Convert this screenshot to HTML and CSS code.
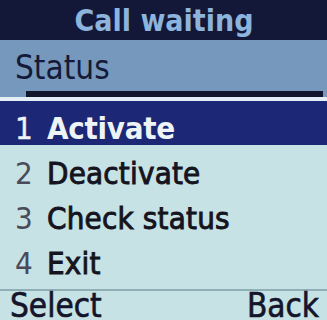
FILE: index.html
```html
<!DOCTYPE html>
<html>
<head>
<meta charset="utf-8">
<link rel="stylesheet" href="styles.css">
</head>
<body>
<div class="screen">
  <div class="header">Call waiting</div>
  <div class="status">
    <div class="status-label">Status</div>
    <div class="status-bar"></div>
  </div>
  <div class="sep"></div>
  <ul class="menu">
    <li class="item selected"><span class="num">1</span><span class="label">Activate</span></li>
    <li class="item"><span class="num">2</span><span class="label">Deactivate</span></li>
    <li class="item"><span class="num">3</span><span class="label">Check status</span></li>
    <li class="item"><span class="num">4</span><span class="label">Exit</span></li>
  </ul>
  <div class="softkeys">
    <span>Select</span>
    <span>Back</span>
  </div>
</div>
</body>
</html>
```
FILE: styles.css
```css
html, body {
  margin: 0;
  padding: 0;
}
body {
  width: 327px;
  height: 320px;
  overflow: hidden;
  background: #c6e2e4;
  font-family: "DejaVu Sans Condensed", "DejaVu Sans", sans-serif;
}
.screen {
  display: flex;
  flex-direction: column;
  width: 327px;
  height: 320px;
  overflow: hidden;
}
.screen > * {
  flex-shrink: 0;
}
.header {
  height: 40px;
  background: #141838;
  color: #8cb4dc;
  font-weight: bold;
  font-size: 30px;
  line-height: 42px;
  text-align: center;
  padding-left: 1px;
}
.status {
  height: 57px;
  background: #7698bc;
  display: flex;
  flex-direction: column;
}
.status-label {
  padding-left: 15px;
  height: 51px;
  font-size: 33px;
  line-height: 56px;
  color: #141a38;
}
.status-bar {
  height: 6px;
  margin-left: 26px;
  margin-right: 4px;
  background: #12162c;
}
.sep {
  height: 4px;
  background: #e4eef6;
}
.menu {
  list-style: none;
  margin: 0;
  padding: 0;
}
.item {
  height: 45px;
  box-sizing: border-box;
  padding-top: 11px;
  line-height: 33px;
  font-size: 31px;
  color: #15141e;
  padding-left: 15px;
  display: flex;
}
.item .num {
  width: 32px;
  color: #4a4a5a;
}
.item .label {
  -webkit-text-stroke: 0.9px #15141e;
  letter-spacing: 0.2px;
}
.item.selected {
  height: 44px;
  background: #1c2876;
  color: #eef4f6;
  margin-bottom: 1px;
}
.item.selected .num {
  color: #eef4f6;
  -webkit-text-stroke: 0.4px #eef4f6;
}
.item.selected .label {
  font-weight: bold;
  -webkit-text-stroke: 0;
  letter-spacing: -0.3px;
}
.softkeys {
  margin-top: 8px;
  height: 30px;
  border-top: 2px solid #90aeb6;
  display: flex;
  justify-content: space-between;
  padding: 0 8px 0 10px;
  font-size: 33px;
  line-height: 29px;
  color: #14142a;
  -webkit-text-stroke: 0.6px #14142a;
}
```
